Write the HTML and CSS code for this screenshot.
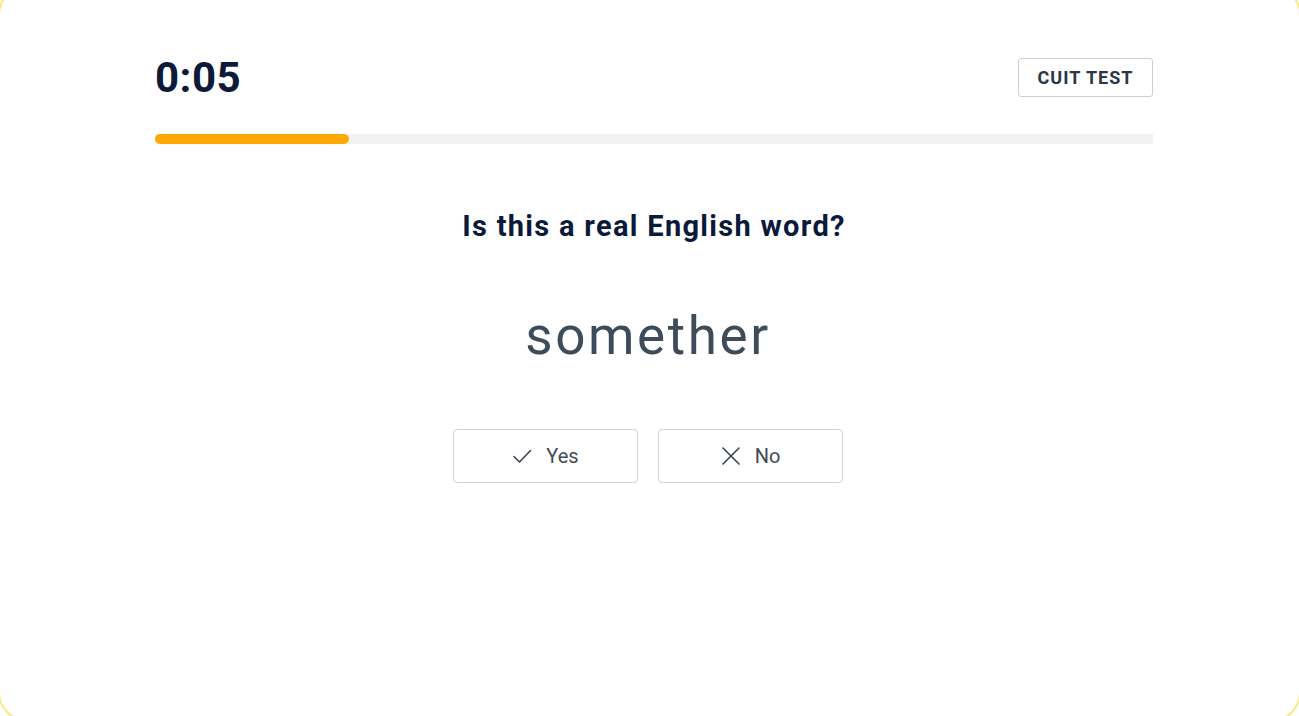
FILE: index.html
```html
<!DOCTYPE html>
<html lang="en">
<head>
    <meta charset="UTF-8">
    <meta name="viewport" content="width=device-width, initial-scale=1.0">
    <title>Vocabulary Test</title>
    <link rel="stylesheet" href="styles.css">
</head>
<body>
    <div class="card">
        <div class="container">
            <div class="top-row">
                <div class="timer">0:05</div>
                <button class="quit">CUIT TEST</button>
            </div>

            <div class="progress">
                <div class="progress-fill" style="width: 19.4%"></div>
            </div>

            <h1 class="question">Is this a real English word?</h1>

            <div class="word">somether</div>

            <div class="answers">
                <button class="answer">
                    <svg width="20" height="20" viewBox="0 0 20 20" fill="none" stroke="#3a4250" stroke-width="1.6" stroke-linecap="round" stroke-linejoin="round">
                        <path d="M2 10.5 L7.5 16 L18.5 4.5"/>
                    </svg>
                    Yes
                </button>
                <button class="answer">
                    <svg width="20" height="20" viewBox="0 0 20 20" fill="none" stroke="#3a4250" stroke-width="1.6" stroke-linecap="round">
                        <path d="M2 2 L18 18 M18 2 L2 18"/>
                    </svg>
                    No
                </button>
            </div>
        </div>
    </div>
</body>
</html>
```

FILE: styles.css
```css
html, body {
    margin: 0;
    height: 100%;
    overflow: hidden;
    background: #fff;
}
body {
    font-family: Roboto, "Noto Sans", Arial, sans-serif;
}
.card {
    box-sizing: border-box;
    margin: -15px -2px 0;
    height: 737px;
    border: 2px solid #fae886;
    border-radius: 30px;
    background: #fff;
    padding-top: 71px;
}
.container {
    width: 998px;
    margin-left: 155px;
}
.top-row {
    display: flex;
    justify-content: space-between;
    align-items: center;
    height: 39px;
}
.timer {
    font-size: 42px;
    font-weight: bold;
    color: #0c1a3a;
    letter-spacing: 0.5px;
}
.quit {
    width: 135px;
    height: 39px;
    border: 1px solid #cfcfcf;
    border-radius: 3px;
    background: #fff;
    font-family: inherit;
    font-size: 18px;
    font-weight: bold;
    letter-spacing: 1px;
    color: #2b3745;
    cursor: pointer;
}
.progress {
    margin-top: 37px;
    height: 10px;
    background: #f2f2f2;
}
.progress-fill {
    height: 100%;
    background: #ffa800;
    border-radius: 5px;
}
.question {
    margin: 64px 0 0;
    text-align: center;
    font-size: 29px;
    font-weight: bold;
    letter-spacing: 1.3px;
    color: #0c1a3a;
    line-height: 36px;
}
.word {
    margin-top: 57px;
    padding-right: 12px;
    text-align: center;
    font-size: 53px;
    letter-spacing: 2.6px;
    color: #3e4c5a;
    line-height: 70px;
}
.answers {
    display: flex;
    justify-content: center;
    gap: 20px;
    margin-top: 58px;
    padding-right: 12px;
}
.answer {
    display: flex;
    align-items: center;
    justify-content: center;
    gap: 14px;
    width: 185px;
    height: 54px;
    border: 1px solid #d2d2d2;
    border-radius: 4px;
    background: #fff;
    font-family: inherit;
    font-size: 20px;
    color: #444b55;
    cursor: pointer;
}
```
